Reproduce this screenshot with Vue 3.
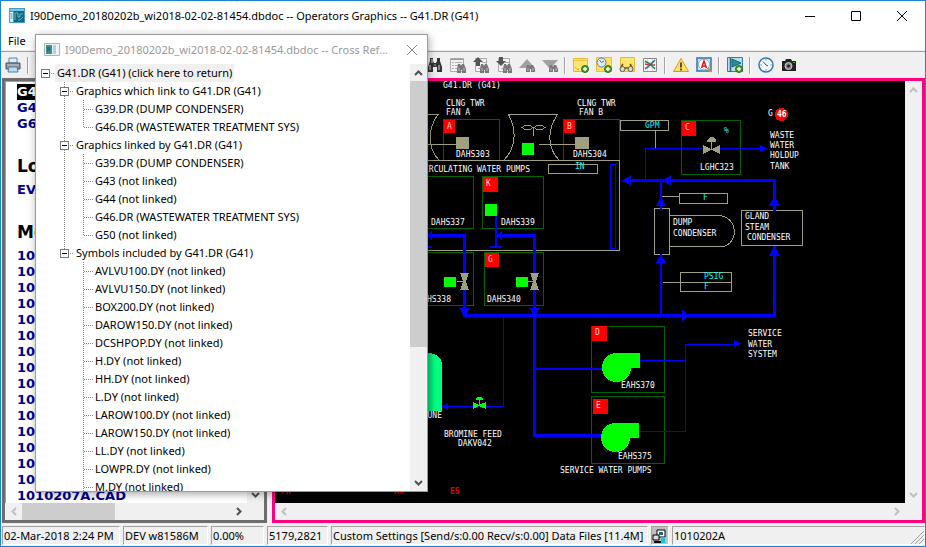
<script setup>
const groups = [
  {
    label: 'Graphics which link to G41.DR (G41)',
    items: ['G39.DR (DUMP CONDENSER)', 'G46.DR (WASTEWATER TREATMENT SYS)'],
  },
  {
    label: 'Graphics linked by G41.DR (G41)',
    items: [
      'G39.DR (DUMP CONDENSER)',
      'G43 (not linked)',
      'G44 (not linked)',
      'G46.DR (WASTEWATER TREATMENT SYS)',
      'G50 (not linked)',
    ],
  },
  {
    label: 'Symbols included by G41.DR (G41)',
    open: true,
    items: [
      'AVLVU100.DY', 'AVLVU150.DY', 'BOX200.DY', 'DAROW150.DY', 'DCSHPOP.DY', 'H.DY', 'HH.DY',
      'L.DY', 'LAROW100.DY', 'LAROW150.DY', 'LL.DY', 'LOWPR.DY', 'M.DY',
    ].map((name) => `${name} (not linked)`),
  },
]

// Each row carries its connector cells, left to right.
const V = 'M9.5 0V18'
const rows = [{ text: 'G41.DR (G41) (click here to return)', root: true, cells: [{ d: 'M14.5 9.5H19', box: true }] }]
groups.forEach((g, gi) => {
  const lastGroup = gi === groups.length - 1
  rows.push({
    text: g.label,
    cells: [{ d: '' }, { d: (lastGroup ? 'M9.5 0V5' : V) + 'M14.5 9.5H19', box: true }],
  })
  g.items.forEach((text, i) => {
    const last = i === g.items.length - 1 && !g.open
    rows.push({
      text,
      cells: [{ d: '' }, { d: lastGroup ? '' : V }, { d: (last ? 'M9.5 0V10' : V) + 'M10 9.5H19' }],
    })
  })
})

const numbered = Array.from({ length: 15 }, () => '10')

const labels = [
  [443, 88, 'G41.DR (G41)'], [446, 106, 'CLNG TWR'], [446, 115, 'FAN A'], [577, 106, 'CLNG TWR'],
  [579, 115, 'FAN B'], [456, 157, 'DAHS303'], [573, 157, 'DAHS304'], [431, 225, 'DAHS337'],
  [501, 225, 'DAHS339'], [487, 302, 'DAHS340'], [444, 437, 'BROMINE FEED'], [458, 446, 'DAKV042'],
  [621, 388, 'EAHS370'], [618, 459, 'EAHS375'], [560, 473, 'SERVICE WATER PUMPS'],
  [748, 336, 'SERVICE'], [748, 347, 'WATER'], [748, 357, 'SYSTEM'], [700, 170, 'LGHC323'],
  [768, 116, 'G'], [770, 138, 'WASTE'], [770, 148, 'WATER'], [770, 158, 'HOLDUP'], [770, 169, 'TANK'],
  [673, 225, 'DUMP'], [673, 236, 'CONDENSER'], [745, 219, 'GLAND'], [745, 230, 'STEAM'], [747, 240, 'CONDENSER'],
]
const endLabels = [[530, 172, 'CIRCULATING WATER PUMPS'], [451, 302, 'DAHS338'], [442, 418, 'TUNE']]
const units = [[575, 169, 'IN'], [645, 128, 'GPM'], [724, 133, '%'], [703, 200, 'F'], [704, 279, 'PSIG'], [704, 289, 'F']]
const tags = [
  [444, 120, 11, 13, 'A'], [564, 120, 11, 13, 'B'], [682, 121, 14, 15, 'C'], [483, 177, 15, 15, 'K'],
  [485, 253, 14, 14, 'G'], [592, 326, 15, 15, 'D'], [593, 399, 15, 15, 'E'],
]
</script>

<template>
  <div class="window">
    <header class="titlebar">
      <svg class="app-icon" width="16" height="16" viewBox="0 0 16 16">
        <rect width="16" height="15" fill="#3f9fc8" /><rect x="1" y="1" width="14" height="2" fill="#7cc4e0" />
        <rect x="1" y="4" width="3" height="10" fill="#d9eef6" /><rect x="5" y="3" width="10" height="11" fill="#17657f" />
        <path d="M1.500 6h2M1.500 8h2M1.500 10h2" stroke="#3f9fc8" />
        <path d="M6 12V5h3v4h2V6h3M9 12h2l3-3" fill="none" stroke="#4fb8c8" />
      </svg>
      <h1>I90Demo_20180202b_wi2018-02-02-81454.dbdoc -- Operators Graphics -- G41.DR (G41)</h1>
      <button class="caption" aria-label="Minimize"><svg width="12" height="12"><path d="M1 6.500H11" /></svg></button>
      <button class="caption" aria-label="Maximize"><svg width="12" height="12"><path d="M1.500 1.500H10.500V10.500H1.500Z" /></svg></button>
      <button class="caption" aria-label="Close"><svg width="12" height="12"><path d="M1 1L11 11M11 1L1 11" /></svg></button>
    </header>
    <nav class="menubar"><button>File</button></nav>

    <div class="toolbar">
      <button aria-label="Print">
        <svg viewBox="0 0 16 16"><path d="M4 1h8v5H4z" fill="#d8eefb" stroke="#5b87a8" /><path d="M1 6h14v6H1z" fill="#8b9097" stroke="#4e5359" /><path d="M2 8h12" stroke="#caced3" /><path d="M4 10h8l1 5H3z" fill="#b9dcf2" stroke="#4f83ab" /></svg>
      </button>
      <i class="sep"></i>
      <div class="tools">
        <button aria-label="Find">
          <svg viewBox="0 0 16 16"><path d="M3 1h3v3l1 2h2l1-2V1h3v3l2 6v5h-5v-5H6v5H1v-5l2-6z" fill="#333" /><path d="M3 8v5M12 8v5M5 2v4" stroke="#ddd" /><path d="M7 8h2" stroke="#aaa" /></svg>
        </button>
        <button aria-label="Find in list">
          <svg viewBox="0 0 16 16"><path d="M.5 1.500h13v13H.5z" fill="#f2f2f2" stroke="#aaa" /><path d="M1 2.500h12" stroke="#999" /><path d="M2 5.500h2M5 5.500h7M2 8.500h2M5 8.500h7M2 11.500h2M5 11.500h3" stroke="#b0b0b0" /><path d="M8 7h2l1 2 1-2h2l2 5v4h-4v-3h-1v3H7v-4z" fill="#777" /><path d="M9 11v3M14 11v3" stroke="#bbb" /></svg>
        </button>
        <button aria-label="Find previous">
          <svg viewBox="0 0 16 16"><path d="M2.500 1.500h11v13h-11z" fill="#f2f2f2" stroke="#aaa" /><path d="M9 5.500h4M5 11.500h3" stroke="#aaa" /><path d="M5 0l5 5H7v4H3V5H0z" fill="#555" /><path d="M8 7h2l1 2 1-2h2l2 5v4h-4v-3h-1v3H7v-4z" fill="#777" /><path d="M9 11v3M14 11v3" stroke="#bbb" /></svg>
        </button>
        <button aria-label="Find next">
          <svg viewBox="0 0 16 16"><path d="M2.500 1.500h11v13h-11z" fill="#f2f2f2" stroke="#aaa" /><path d="M9 5.500h4M5 11.500h3" stroke="#aaa" /><path d="M5 9L0 4h3V0h4v4h3z" fill="#555" /><path d="M8 7h2l1 2 1-2h2l2 5v4h-4v-3h-1v3H7v-4z" fill="#777" /><path d="M9 11v3M14 11v3" stroke="#bbb" /></svg>
        </button>
        <button aria-label="Search up">
          <svg viewBox="0 0 16 16"><path d="M8 2l8 9H0z" fill="#a0a0a0" /><path d="M8 8h2l1 2 1-2h2l2 4v3h-4v-3h-1v3H7v-3z" fill="#777" /><path d="M9 11v3M14 11v3" stroke="#bbb" /></svg>
        </button>
        <button aria-label="Search down">
          <svg viewBox="0 0 16 16"><path d="M0 3h16l-8 9z" fill="#a0a0a0" /><path d="M8 8h2l1 2 1-2h2l2 4v3h-4v-3h-1v3H7v-3z" fill="#777" /><path d="M9 11v3M14 11v3" stroke="#bbb" /></svg>
        </button>
        <i class="sep"></i>
        <button aria-label="Add note">
          <svg viewBox="0 0 16 16"><path d="M.5 1.500h14v13H.5z" fill="#fde571" stroke="#e3b933" /><path d="M1 3.500h13" stroke="#f0c63d" /><path d="M2 10l3 3v-2" fill="#fff7c8" stroke="#d9ae2c" /><circle cx="12" cy="12" r="3.500" fill="#4d9a1f" stroke="#2f7411" /><path d="M10 12h4M12 10v4" stroke="#fff" stroke-width="1.500" /></svg>
        </button>
        <button aria-label="Add timed note">
          <svg viewBox="0 0 16 16"><path d="M.5 .5h15v14H.5z" fill="#fbe15c" stroke="#e3c32f" /><circle cx="5.500" cy="5.500" r="4.500" fill="#dcecf8" stroke="#4c83b6" /><path d="M3.500 3l2 2.500L8 4" fill="none" stroke="#5b6b7c" /><circle cx="12" cy="12" r="3.500" fill="#4d9a1f" stroke="#2f7411" /><path d="M10 12h4M12 10v4" stroke="#fff" stroke-width="1.500" /></svg>
        </button>
        <button aria-label="View notes">
          <svg viewBox="0 0 16 16"><path d="M1.500 .5h14v14h-14z" fill="#fde571" stroke="#e3b933" /><path d="M2 10l2-3M13 10l-2-3M6 11h3" stroke="#7a4b16" stroke-width="1.500" /><circle cx="3.500" cy="12" r="2.500" fill="#c3e6e4" stroke="#6b5a34" /><circle cx="11.500" cy="12" r="2.500" fill="#c3e6e4" stroke="#6b5a34" /></svg>
        </button>
        <button aria-label="Trend">
          <svg viewBox="0 0 16 16"><path d="M1.500 1.500h13v13h-13z" fill="#fff" stroke="#888" /><path d="M2 5.500h12M2 10.500h12M5.500 2v12M10.500 2v12" stroke="#d5dce3" /><path d="M3 4l5 3 5 5" fill="none" stroke="#2c8a3c" stroke-width="1.500" /><path d="M3 7l4 1 6 0" fill="none" stroke="#c33" stroke-width="1.500" /><path d="M3 12l4-3 6-6" fill="none" stroke="#23669c" stroke-width="1.500" /></svg>
        </button>
        <i class="sep"></i>
        <button aria-label="Alarms">
          <svg viewBox="0 0 16 16"><path d="M8 1.500L15.500 14.500H.5z" fill="#fde067" stroke="#d79b1c" stroke-linejoin="round" /><path d="M8 5.500v5M8 11.500v2" stroke="#222" stroke-width="1.500" /></svg>
        </button>
        <button aria-label="Search text">
          <svg viewBox="0 0 16 16"><path d="M1 1h14v13H1z" fill="#cfe3f4" stroke="#2c74b3" stroke-width="1.500" /><circle cx="8" cy="7.500" r="5.500" fill="#fff" stroke="#8aa" /><path d="M5.500 11L8 4l2.500 7M6.500 9h3" fill="none" stroke="#e11" stroke-width="1.500" /><path d="M12 11l3 4" stroke="#d98a3a" stroke-width="2" /></svg>
        </button>
        <i class="sep"></i>
        <button aria-label="Add flag">
          <svg viewBox="0 0 16 16"><path d="M.5 .5h15v14H.5z" fill="#b9dcee" stroke="#2e7fae" /><path d="M3.500 1v14" stroke="#29607f" stroke-width="1.500" /><path d="M5 2l9 4-9 4z" fill="#2391a0" stroke="#0f6674" /><circle cx="12" cy="12" r="3.500" fill="#4d9a1f" stroke="#2f7411" /><path d="M10 12h4M12 10v4" stroke="#fff" stroke-width="1.500" /></svg>
        </button>
        <i class="sep"></i>
        <button aria-label="Time">
          <svg viewBox="0 0 16 16"><circle cx="8" cy="8" r="7" fill="#f6fbff" stroke="#2d76b8" stroke-width="1.500" /><path d="M8 2v2M8 12v2M2 8h2M12 8h2" stroke="#7fa9cc" /><path d="M5 4.500L8 8l2 1" fill="none" stroke="#445" /></svg>
        </button>
        <button aria-label="Snapshot">
          <svg viewBox="0 0 16 16"><path d="M1 4h3l1-2h5l1 2h4v10H1z" fill="#222" /><circle cx="7.500" cy="9" r="3.500" fill="#888" stroke="#ccc" /><circle cx="7.500" cy="9" r="1.500" fill="#222" /><path d="M12 5h2v1h-2z" fill="#4caf30" /></svg>
        </button>
      </div>
    </div>

    <main class="panes">
      <section class="index">
        <div class="index-body">
          <div class="index-list">
            <a href="#" class="current">G4</a>
            <a href="#">G4</a>
            <a href="#">G6</a>
            <h2>Lo</h2>
            <a href="#">EVA</a>
            <h2>Mo</h2>
            <a v-for="(n, i) in numbered" :key="i" href="#">{{ n }}</a>
            <a href="#">1010207A.CAD</a>
          </div>
          <div class="vbar">
            <button aria-label="Scroll up"><svg width="9" height="6"><path d="M1 5L4.500 1.500L8 5" /></svg></button>
            <button aria-label="Scroll down"><svg width="9" height="6"><path d="M1 1L4.500 4.500L8 1" /></svg></button>
          </div>
        </div>
        <div class="hbar">
          <button class="off" aria-label="Scroll left"><svg width="6" height="9"><path d="M5 1L1.500 4.500L5 8" /></svg></button>
          <i class="thumb"></i>
          <button aria-label="Scroll right"><svg width="6" height="9"><path d="M1 1L4.500 4.500L1 8" /></svg></button>
          <i class="corner"></i>
        </div>
      </section>

      <section class="graphic">
        <div class="graphic-body">
          <div class="canvas">
            <svg class="diagram" width="630" height="423" viewBox="275 81 630 423" shape-rendering="crispEdges">
              <defs>
                <linearGradient id="tank" x1="0" x2="1"><stop offset="0" stop-color="#009a50" /><stop offset=".4" stop-color="#00c466" /><stop offset=".75" stop-color="#00ff80" /><stop offset="1" stop-color="#00ff80" /></linearGradient>
              </defs>
              <g fill="none" stroke="#006400">
                <path d="M443.500 160V119.500H499.500V160M563.500 160V119.500H619.500V160" />
                <path d="M681.500 120.500H740.500V174.500H681.500Z" />
                <path d="M412.500 176.500H473.500V228.500H412.500ZM482.500 176.500H543.500V228.500H482.500Z" />
                <path d="M412.500 252.500H473.500V305.500H412.500ZM484.500 252.500H543.500V305.500H484.500Z" />
                <path d="M591.500 326.500H664.500V392.500H591.500ZM591.500 396.500H664.500V463.500H591.500Z" />
              </g>
              <g fill="none" stroke="#a0a080">
                <path d="M420 160.500H619.500V250.500H420" />
                <path d="M420 114.500H438C428 128 427 148 439 160M420 144.500H456" />
                <path d="M508.500 114.500H557.500C547 130 547 148 559 160M508.500 114.500C517 130 516 148 504 160" />
                <path d="M522 127.500L525 125.500H530L533 127.500L530 129.500H525ZM534 127.500L537 125.500H542L545 127.500L542 129.500H537ZM533.500 127V136" />
                <path d="M539 144.500H576" />
                <path d="M548.500 164.500H597.500V173.500H548.500Z" />
                <path d="M620.500 120.500H668.500V130.500H620.500ZM655.500 130V149" />
                <path d="M679.500 193.500H727.500V203.500H679.500ZM662 196.500H679" />
                <path d="M654.500 208.500H669.500V254.500H654.500ZM670 215.500H718C739 216 739 245 722 246.500H670" />
                <path d="M741.500 210.500H802.500V245.500H741.500Z" />
                <path d="M680.500 272.500H731.500V291.500H680.500ZM663 282.500H731" />
                <path d="M457 281.500H465M528 281.500H535M711.500 141V150" />
              </g>
              <g fill="none" stroke="#00f">
                <path d="M610.500 164.500H615.500V248.500H610.500Z" />
                <path d="M645.500 180V148.500H702M720 148.500H762" />
                <path d="M503.500 316V406.500H447" />
                <path d="M640 360.500H685.500M639 431.500H685.500V344.500H736" />
                <path stroke-width="2" d="M496 216V247M490 247H502M427 247H432M661 180V209M661 254V315M535 369H603" />
                <path stroke-width="3" d="M624 180.500H774.500V211M774.500 246V315.500H463M497 235.500H534.500V273M534.500 288V435.500H602M420 235.500H464.500V273M464.500 288V315" />
              </g>
              <g fill="#00f">
                <path d="M622 180.500L631 175V186ZM662 180.500L671 175V186ZM661 196L656 205.500H666ZM774.500 196L769 206H780ZM661 254L656 263H666ZM774.500 246L769 255.500H780ZM690 315.500L682 310V321ZM534.500 317L529 308H540ZM464.500 317L459 308H470ZM497 235.500L502 231V240ZM427 235.500L432 231V240ZM767 148.500L760 145V152ZM741 343.500L734 340V347ZM441 406.500L448 403V410Z" />
              </g>
              <g fill="#a0a080">
                <path d="M456 137H469V149H456ZM575 137H589V149H575Z" />
                <path d="M460 273H469L466 281.500L469 290H460L463 281.500ZM530 273H539L536 281.500L539 290H530L533 281.500Z" />
                <path d="M703 145L711.500 149L720 145V154L711.500 150L703 154ZM707 142V140L709 138L711 137H713L715 138L716 140V142Z" />
              </g>
              <g fill="#0f0">
                <path d="M522 143H534V155H522ZM485 204H497V216H485ZM444 277H456V287H444ZM516 277H528V287H516Z" />
                <path d="M616 353H640V368H631A14.500 14.500 0 1 1 616 353ZM615 423H639V438H630A14.500 14.500 0 1 1 615 423Z" />
                <path d="M473 402L479 405L486 402V409L479 406L473 409ZM479 400H480V405H479ZM476 400V398L478 397H481L483 398V400Z" />
              </g>
              <path d="M412 411V365Q413 353 427 353Q441 353 442 365V411Z" fill="url(#tank)" />
              <g v-for="t in tags" :key="t[4]">
                <rect :x="t[0]" :y="t[1]" :width="t[2]" :height="t[3]" fill="#f00" />
                <text :x="t[0] + 3" :y="t[1] + 9" fill="#fcc">{{ t[4] }}</text>
              </g>
              <path d="M420 177H428V192H420ZM420 253H428V267H420Z" fill="#f00" />
              <circle cx="781.500" cy="114.500" r="6.500" fill="#f00" />
              <g fill="#fff">
                <text v-for="(l, i) in labels" :key="i" :x="l[0]" :y="l[1]">{{ l[2] }}</text>
                <text v-for="l in endLabels" :key="l[2]" :x="l[0]" :y="l[1]" text-anchor="end">{{ l[2] }}</text>
                <text x="777" y="117" class="strong">46</text>
              </g>
              <g fill="#0ff"><text v-for="(l, i) in units" :key="i" :x="l[0]" :y="l[1]">{{ l[2] }}</text></g>
              <g fill="#e00000" class="strong"><text x="281" y="494">FR</text><text x="394" y="494">RX</text><text x="450" y="494">ES</text></g>
            </svg>
          </div>
          <div class="vbar off">
            <button aria-label="Scroll up"><svg width="9" height="6"><path d="M1 5L4.500 1.500L8 5" /></svg></button>
            <button aria-label="Scroll down"><svg width="9" height="6"><path d="M1 1L4.500 4.500L8 1" /></svg></button>
          </div>
        </div>
        <div class="hbar spread">
          <button class="off" aria-label="Scroll left"><svg width="6" height="9"><path d="M5 1L1.500 4.500L5 8" /></svg></button>
          <button class="off" aria-label="Scroll right"><svg width="6" height="9"><path d="M1 1L4.500 4.500L1 8" /></svg></button>
          <i class="corner"></i>
        </div>
      </section>
    </main>

    <footer class="status">
      <span>02-Mar-2018 2:24 PM</span>
      <span>DEV w81586M</span>
      <span>0.00%</span>
      <span>5179,2821</span>
      <span>Custom Settings [Send/s:0.00 Recv/s:0.00] Data Files [11.4M]</span>
      <span class="net">
        <svg width="16" height="16" viewBox="0 0 16 16"><path d="M5 2h8v7H5z" fill="#fff" stroke="#000" /><path d="M7 4h4v3H7z" fill="#1a6b78" /><path d="M1 7h6v5H1z" fill="#ddd" stroke="#000" /><path d="M2 13h8v2H2z" fill="#111" /><path d="M9 9h4v6H9z" fill="#12c8d8" /></svg>
      </span>
      <span>1010202A
        <svg class="grip" width="14" height="14"><path d="M1 14L14 1M5 14L14 5M9 14L14 9" /></svg>
      </span>
    </footer>

    <section class="dialog" role="dialog" aria-labelledby="xref-title">
      <header>
        <svg width="16" height="13" viewBox="0 0 16 13"><path d="M.5.5h15v12H.5z" fill="#eef3f5" stroke="#a9b4ba" /><path d="M2 2h6v9H2z" fill="#3f8f86" /><path d="M9 2h3v9H9z" fill="#b9cfe0" /><path d="M3 4h3v4H3z" fill="#2d6f8a" /></svg>
        <h2 id="xref-title">I90Demo_20180202b_wi2018-02-02-81454.dbdoc -- Cross Ref...</h2>
        <button aria-label="Close"><svg width="12" height="12"><path d="M1 1L11 11M11 1L1 11" /></svg></button>
      </header>
      <div class="dialog-body">
        <ul class="tree">
          <li v-for="(r, i) in rows" :key="i">
            <svg v-for="(c, j) in r.cells" :key="j" width="19" height="18" shape-rendering="crispEdges">
              <path :d="c.d" class="dots" />
              <path v-if="c.box" d="M5.500 5.500H13.500V13.500H5.500Z" fill="#fff" stroke="#777" />
              <path v-if="c.box" d="M7 9.500H12" stroke="#000" />
            </svg>
            <button :class="{ root: r.root }">{{ r.text }}</button>
          </li>
        </ul>
        <div class="vbar">
          <button aria-label="Scroll up"><svg width="9" height="6"><path d="M1 5L4.500 1.500L8 5" /></svg></button>
          <i class="thumb"></i>
          <button aria-label="Scroll down"><svg width="9" height="6"><path d="M1 1L4.500 4.500L8 1" /></svg></button>
        </div>
      </div>
    </section>
  </div>
</template>

<style>
body { margin: 0; overflow: hidden; }
</style>

<style scoped>
* { box-sizing: border-box; }
.window {
  position: relative;
  display: flex;
  flex-direction: column;
  height: 100vh;
  border: 1px solid #1883d7;
  background: #f0f0f0;
  color: #000;
  font: 11px/16px "Noto Sans", "Open Sans", sans-serif;
}
button { padding: 0; border: 0; background: none; color: inherit; font: inherit; display: flex; align-items: center; justify-content: center; }
h1, h2 { margin: 0; font-size: 11px; font-weight: 400; }
svg { display: block; flex: none; }

.titlebar { display: flex; align-items: center; height: 29px; padding-left: 8px; background: #fff; }
.titlebar h1 { flex: 1; padding-left: 5px; white-space: nowrap; }
.caption { width: 46px; height: 29px; }
.caption path { fill: none; stroke: #000; }
.menubar { height: 21px; padding-left: 7px; background: #fff; border-bottom: 1px solid #f0f0f0; }
.menubar button { height: 21px; }

.toolbar { display: flex; align-items: center; height: 27px; border-top: 1px solid #a0a0a0; }
.toolbar button { width: 23px; height: 26px; }
.toolbar button svg { width: 16px; height: 16px; }
.sep { flex: none; width: 2px; height: 17px; margin: 0 3px; border-left: 1px solid #a0a0a0; border-right: 1px solid #fff; }
.tools { display: flex; align-items: center; margin-left: 391px; }

.panes { flex: 1; min-height: 0; display: flex; gap: 5px; padding-left: 1px; }
.index { width: 265px; display: flex; flex-direction: column; border: 3px solid #6d6d6d; }
.index-body, .graphic-body { flex: 1; min-height: 0; display: flex; }
.index-list { flex: 1; padding: 2px 0 0 11px; background: #fff; overflow: hidden; border-left: 1px solid #a0a0a0; border-top: 1px solid #a0a0a0; font: bold 13px/16px "DejaVu Sans", sans-serif; }
.index-list a { display: block; color: #00008b; text-decoration: none; }
.index-list a.current { width: 60px; background: #000; color: #fff; }
.index-list h2 { font: bold 17px/24px "DejaVu Sans", sans-serif; padding: 22px 0 4px; }

.vbar { flex: none; width: 17px; display: flex; flex-direction: column; justify-content: space-between; background: #f0f0f0; }
.hbar { flex: none; height: 17px; display: flex; background: #f0f0f0; }
.vbar button, .hbar button { width: 17px; height: 17px; flex: none; }
.vbar path, .hbar path { fill: none; stroke: #505050; stroke-width: 2; }
.vbar.off path, .hbar .off path { stroke: #bfbfbf; }
.thumb { background: #cdcdcd; }
.corner { width: 17px; }
.hbar .thumb { width: 93px; margin-right: auto; }
.spread button + button { margin-left: auto; }

.graphic { flex: 1; min-width: 0; display: flex; flex-direction: column; border: 3px solid #ff0080; }
.canvas { flex: 1; min-width: 0; overflow: hidden; background: #000; }
.diagram { font: 8px "DejaVu Sans Mono", monospace; }
.strong { font-weight: bold; }

.status { flex: none; display: grid; grid-template-columns: 118px 85px 53px 61px 317px 18px 1fr; gap: 3px; height: 23px; padding: 3px 0 1px 1px; }
.status span { display: flex; align-items: center; border: 1px solid; border-color: #a0a0a0 #fff #fff #a0a0a0; padding-left: 1px; white-space: nowrap; overflow: hidden; }
.status .net { background: #c0c0c0; padding: 0; }
.grip { margin-left: auto; align-self: flex-end; }
.grip path { stroke: #a0a0a0; stroke-width: 1; }

.dialog { position: absolute; left: 34px; top: 33px; width: 393px; height: 458px; display: flex; flex-direction: column; background: #fff; border: 1px solid #9a9a9a; box-shadow: 1px 2px 8px rgba(0, 0, 0, .35); }
.dialog header { flex: none; display: flex; align-items: center; height: 29px; padding-left: 8px; color: #999; }
.dialog h2 { flex: 1; padding-left: 5px; white-space: nowrap; }
.dialog header button { width: 30px; height: 29px; }
.dialog header path { stroke-width: 1; }
.dialog header button path { stroke: #888; }
.dialog-body { flex: 1; min-height: 0; display: flex; }
.tree { flex: 1; margin: 0; padding: 0; list-style: none; overflow: hidden; }
.tree li { display: flex; height: 18px; }
.tree button { padding: 0 2px; height: 18px; white-space: nowrap; }
.tree .root { background: #f0f0f0; }
.dots { fill: none; stroke: #808080; stroke-dasharray: 1 1; }
.dialog .vbar { justify-content: flex-start; }
.vbar .thumb { height: 266px; margin-bottom: auto; }
</style>
